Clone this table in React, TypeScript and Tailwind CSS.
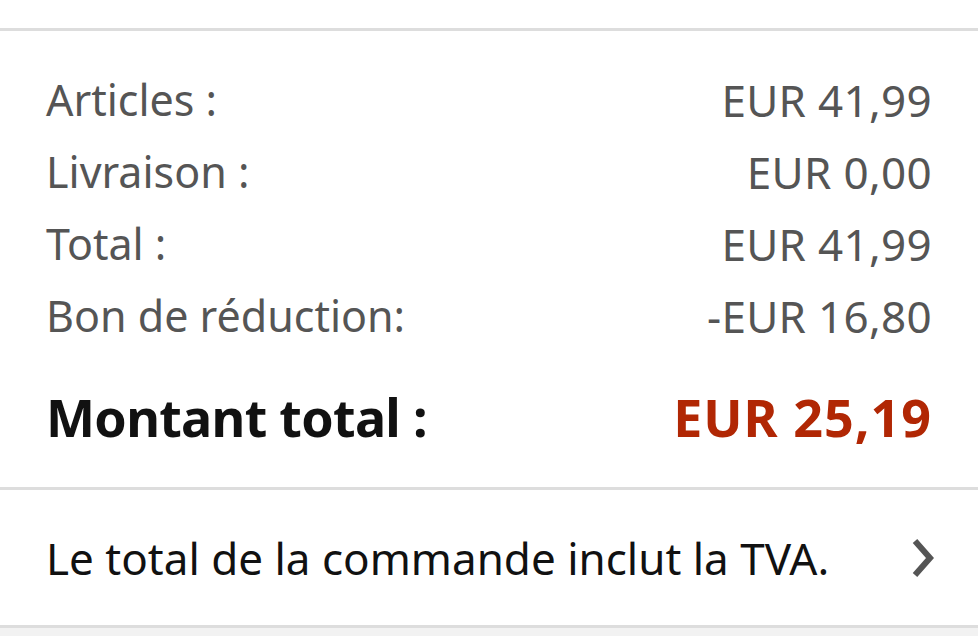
import React from "react";

const rows = [
  ["Articles :", "EUR 41,99"],
  ["Livraison :", "EUR 0,00"],
  ["Total :", "EUR 41,99"],
  ["Bon de réduction:", "-EUR 16,80"],
];

export default function App() {
  return (
    <div className="w-[978px] h-[636px] bg-white overflow-hidden" style={{ fontFamily: '"Noto Sans", "Open Sans", sans-serif' }}>
      <div className="h-[28px] bg-white" />
      <div className="border-t-[3px] border-[#dddddd]">
        <div className="pl-[46px] pr-[46px] pt-[33px] pb-[34px]">
          {rows.map(([l, v]) => (
            <div key={l} className="flex justify-between items-center h-[72px] text-[44px] text-[#555555]">
              <span className="text-[43px]">{l}</span>
              <span className="tracking-[0.3px]">{v}</span>
            </div>
          ))}
          <div className="flex justify-between items-center h-[72px] mt-[29px] text-[52px] font-bold">
            <span className="text-[#111111] tracking-[-0.7px]">Montant total :</span>
            <span className="text-[#B12704] tracking-[1px]">EUR 25,19</span>
          </div>
        </div>
      </div>
      <div className="border-t-[3px] border-[#dddddd] h-[138px] flex items-center justify-between pl-[46px] pr-[42px]">
        <span className="text-[44px] text-[#111111]">Le total de la commande inclut la TVA.</span>
        <svg width="26" height="42" viewBox="0 0 26 42">
          <path d="M5 4 L20 21 L5 38" fill="none" stroke="#555555" strokeWidth="6" />
        </svg>
      </div>
      <div className="border-t-[3px] border-[#dddddd] h-[20px] bg-[#f2f2f2]" />
    </div>
  );
}
